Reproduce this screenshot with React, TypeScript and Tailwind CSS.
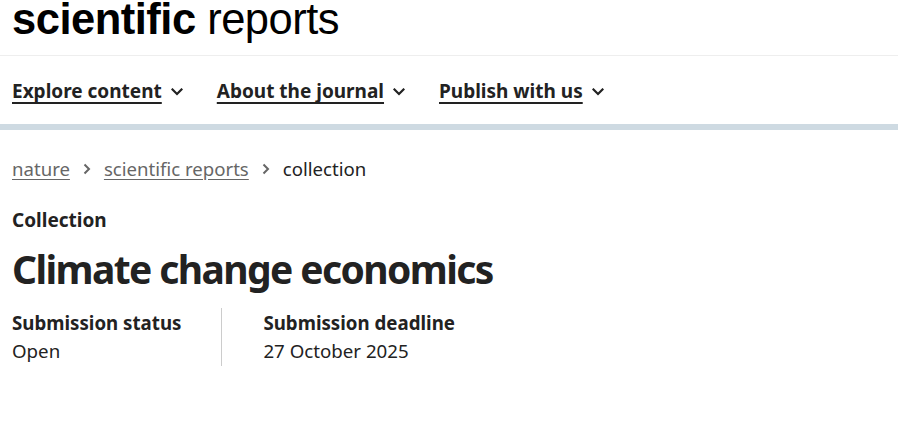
import React from 'react';

const Chevron: React.FC = () => (
  <svg width="12" height="8" viewBox="0 0 12 8" className="ml-[9px] mt-[1px]" fill="none">
    <path d="M1.5 1.5L6 6L10.5 1.5" stroke="#222" strokeWidth="2.2" strokeLinecap="square" />
  </svg>
);

const Crumb: React.FC = () => (
  <svg width="8" height="12" viewBox="0 0 8 12" className="mx-[13px]" fill="none">
    <path d="M1.5 1.5L6 6L1.5 10.5" stroke="#666" strokeWidth="2" />
  </svg>
);

const App: React.FC = () => {
  const font = { fontFamily: '"Noto Sans", "Open Sans", sans-serif' };
  return (
    <div className="w-[898px] h-[422px] bg-white text-[#222] overflow-hidden" style={font}>
      {/* Logo */}
      <header className="h-[56px] border-b border-[#eeeeee] px-[12px] overflow-hidden">
        <div className="text-[43.5px] leading-[38px] text-black tracking-[-0.5px]" style={{ fontFamily: '"Liberation Sans", Arial, sans-serif' }}>
          <span className="font-bold">scientific</span> reports
        </div>
      </header>

      {/* Nav */}
      <nav className="h-[68px] px-[12px] pt-[3px] flex items-center gap-[34px]">
        {['Explore content', 'About the journal', 'Publish with us'].map((item) => (
          <a key={item} className="flex items-center text-[19px] font-bold underline underline-offset-[4px] decoration-[2px] text-[#222]">
            <span>{item}</span>
            <Chevron />
          </a>
        ))}
      </nav>
      <div className="h-[6px] bg-[#cedae2]" />

      {/* Breadcrumb */}
      <div className="px-[12px] pt-[26px] flex items-center text-[18.6px] leading-[26px]">
        <a className="text-[#666] underline underline-offset-[3px]">nature</a>
        <Crumb />
        <a className="text-[#666] underline underline-offset-[3px]">scientific reports</a>
        <Crumb />
        <span className="text-[#222]">collection</span>
      </div>

      <div className="px-[12px] pt-[26px]">
        <p className="text-[19px] font-bold leading-[24px]">Collection</p>
        <h1 className="text-[39px] font-bold leading-[50px] mt-[12px] tracking-[-1.6px]">Climate change economics</h1>

        <div className="flex mt-[14px]">
          <div className="pr-[40px] border-r border-[#cccccc] py-[1px]">
            <p className="text-[18.7px] font-bold leading-[28px]">Submission status</p>
            <p className="text-[18.7px] leading-[28px]">Open</p>
          </div>
          <div className="pl-[41px] py-[1px]">
            <p className="text-[18.7px] font-bold leading-[28px]">Submission deadline</p>
            <p className="text-[18.7px] leading-[28px]">27 October 2025</p>
          </div>
        </div>
      </div>
    </div>
  );
};

export default App;
